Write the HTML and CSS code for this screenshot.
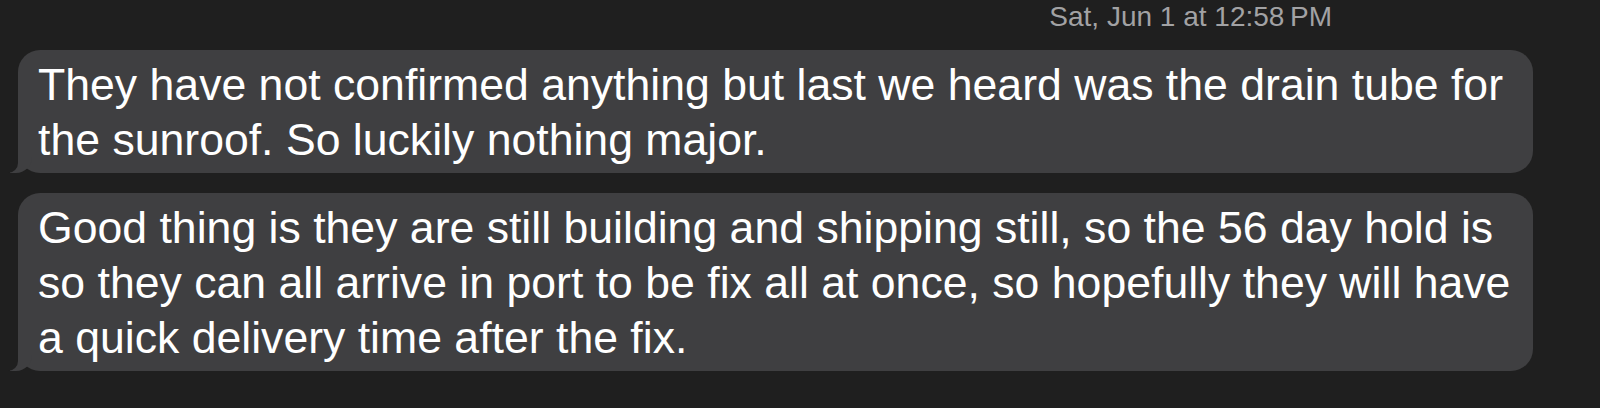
FILE: index.html
```html
<!DOCTYPE html>
<html lang="en">
<head>
  <meta charset="UTF-8">
  <meta name="viewport" content="width=device-width, initial-scale=1.0">
  <title>Messages</title>
  <link rel="stylesheet" href="styles.css">
</head>
<body>
  <div class="thread">
    <div class="timestamp">Sat, Jun 1 at 12:58&#8201;PM</div>

    <div class="messages">
      <div class="bubble received">They have not confirmed anything but last we heard was the drain tube for the sunroof. So luckily nothing major.</div>
      <div class="bubble received">Good thing is they are still building and shipping still, so the 56 day hold is so they can all arrive in port to be fix all at once, so hopefully they will have a quick delivery time after the fix.</div>
    </div>
  </div>
</body>
</html>
```

FILE: styles.css
```css
* {
  box-sizing: border-box;
  margin: 0;
  padding: 0;
}

body {
  font-family: "Liberation Sans", Arial, sans-serif;
  background-color: #1f1f1f;
  color: white;
  overflow: hidden;
}

.thread {
  padding-left: 18px;
}

.timestamp {
  padding-top: 1px;
  padding-right: 268px;
  margin-bottom: 17px;
  text-align: right;
  font-size: 28px;
  line-height: 32px;
  color: #a2a2a4;
}

.messages {
  display: flex;
  flex-direction: column;
  align-items: flex-start;
  gap: 20px;
}

.bubble {
  position: relative;
  max-width: 1515px;
  padding: 7px 20px 6px 20px;
  border-radius: 22px;
  font-size: 44.6px;
  line-height: 55px;
}

.received {
  background-color: #3f3f41;
  color: #fff;
}

/* tail */
.received::before {
  content: "";
  position: absolute;
  bottom: 0;
  left: -8px;
  width: 22px;
  height: 22px;
  background-color: #3f3f41;
  border-bottom-right-radius: 16px;
}

.received::after {
  content: "";
  position: absolute;
  bottom: 0;
  left: -12px;
  width: 12px;
  height: 22px;
  background-color: #1f1f1f;
  border-bottom-right-radius: 10px;
}
```
